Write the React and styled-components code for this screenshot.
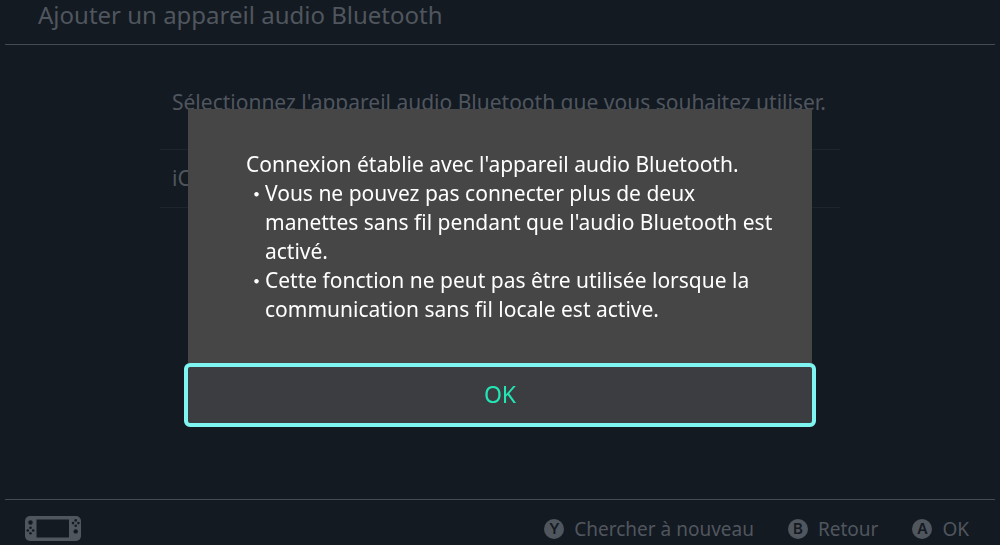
import styled, { createGlobalStyle } from "styled-components";

const GlobalStyle = createGlobalStyle`
  * {
    box-sizing: border-box;
  }

  body {
    margin: 0;
    background: #141a22;
    color: #50565e;
    font-family: "Noto Sans", "Open Sans", sans-serif;
  }
`;

const hints = [
  { letter: 'Y', label: 'Chercher à nouveau' },
  { letter: 'B', label: 'Retour' },
  { letter: 'A', label: 'OK' },
];

const notes = [
  "Vous ne pouvez pas connecter plus de deux manettes sans fil pendant que l'audio Bluetooth est activé.",
  "Cette fonction ne peut pas être utilisée lorsque la communication sans fil locale est active.",
];

const ConsoleIcon = () => (
  <svg width="56" height="25" viewBox="0 0 56 25" aria-hidden="true">
    <rect x="0" y="0" width="56" height="25" rx="5" fill="#50565e" />
    <rect x="11.5" y="3.5" width="32.5" height="18" fill="#141a22" />
    <g fill="#141a22">
      <circle cx="5.5" cy="6.5" r="2.2" />
      <circle cx="5.5" cy="11.8" r="1.3" />
      <circle cx="5.5" cy="17.2" r="1.3" />
      <circle cx="2.8" cy="14.5" r="1.3" />
      <circle cx="8.2" cy="14.5" r="1.3" />
      <circle cx="50.7" cy="4.4" r="1.3" />
      <circle cx="50.7" cy="9.8" r="1.3" />
      <circle cx="48" cy="7.1" r="1.3" />
      <circle cx="53.4" cy="7.1" r="1.3" />
      <circle cx="50.7" cy="15.4" r="2.2" />
    </g>
  </svg>
);

const App = () => {
  return (
    <Screen>
      <GlobalStyle />
      <Header>
        <h1>Ajouter un appareil audio Bluetooth</h1>
      </Header>

      <Content>
        <p className="prompt">Sélectionnez l'appareil audio Bluetooth que vous souhaitez utiliser.</p>
        <DeviceList>
          <li>iC</li>
        </DeviceList>
      </Content>

      <Footer>
        <ConsoleIcon />
        <Hints>
          {hints.map(({ letter, label }) => (
            <HintButton key={letter}>
              <span className="badge">{letter}</span>
              {label}
            </HintButton>
          ))}
        </Hints>
      </Footer>

      <Overlay>
        <Dialog role="dialog" aria-modal="true">
          <Message>
            <p>Connexion établie avec l'appareil audio Bluetooth.</p>
            <ul>
              {notes.map(note => (
                <li key={note}>
                  <span className="dot">・</span>
                  <span>{note}</span>
                </li>
              ))}
            </ul>
          </Message>
          <ConfirmButton>OK</ConfirmButton>
        </Dialog>
      </Overlay>
    </Screen>
  );
};

export default App;

const Screen = styled.div`
  min-height: 100vh;
  display: flex;
  flex-direction: column;
  padding: 0 5px;
`;

const Header = styled.header`
  height: 45px;
  padding: 0 33px;
  border-bottom: 1px solid #454b52;

  > h1 {
    margin: 0;
    font-size: 24px;
    font-weight: 400;
    line-height: 30px;
  }
`;

const Content = styled.main`
  flex-grow: 1;
  width: 100%;
  max-width: 680px;
  margin: 0 auto;
  padding-top: 43px;
  font-size: 21px;

  > .prompt {
    margin: 0;
    padding: 0 12px;
    line-height: 28px;
    white-space: nowrap;
  }
`;

const DeviceList = styled.ul`
  margin: 33px 0 0;
  padding: 0;
  list-style: none;
  border-top: 1px solid #1d242c;

  > li {
    padding: 0 12px;
    line-height: 57px;
    border-bottom: 1px solid #1d242c;
  }
`;

const Footer = styled.footer`
  display: flex;
  align-items: center;
  justify-content: space-between;
  height: 46px;
  padding: 12px 26px 0 20px;
  border-top: 1px solid #454b52;
`;

const Hints = styled.div`
  display: flex;
  gap: 34px;
`;

const HintButton = styled.button`
  display: flex;
  align-items: center;
  gap: 10px;
  padding: 0;
  border: none;
  background: transparent;
  color: inherit;
  font-family: inherit;
  font-size: 19px;
  line-height: 28px;

  > .badge {
    width: 20px;
    height: 20px;
    border-radius: 50%;
    background: #50565e;
    color: #141a22;
    font-family: Inter, sans-serif;
    font-size: 15px;
    font-weight: 600;
    line-height: 20px;
    text-align: center;
  }
`;

const Overlay = styled.div`
  position: fixed;
  inset: 0;
  display: flex;
  align-items: center;
  justify-content: center;
  padding-bottom: 9px;
`;

const Dialog = styled.div`
  width: 100%;
  max-width: 632px;
  display: flex;
  flex-direction: column;
`;

const Message = styled.div`
  margin: 0 4px;
  padding: 41px 36px 39px 58px;
  background: #464646;
  color: #ffffff;
  font-size: 21px;
  line-height: 29px;

  > p {
    margin: 0;
  }

  > ul {
    margin: 0;
    padding: 0;
    list-style: none;
  }

  > ul > li {
    display: flex;
  }

  .dot {
    flex: none;
    width: 19px;
    font-family: "Noto Sans CJK JP", sans-serif;
  }
`;

const ConfirmButton = styled.button`
  height: 64px;
  padding: 0 0 2px;
  border: 4px solid #7ff5f2;
  border-radius: 6px;
  background: #3b3d41;
  color: #23e6b4;
  font-family: inherit;
  font-size: 23px;
`;
